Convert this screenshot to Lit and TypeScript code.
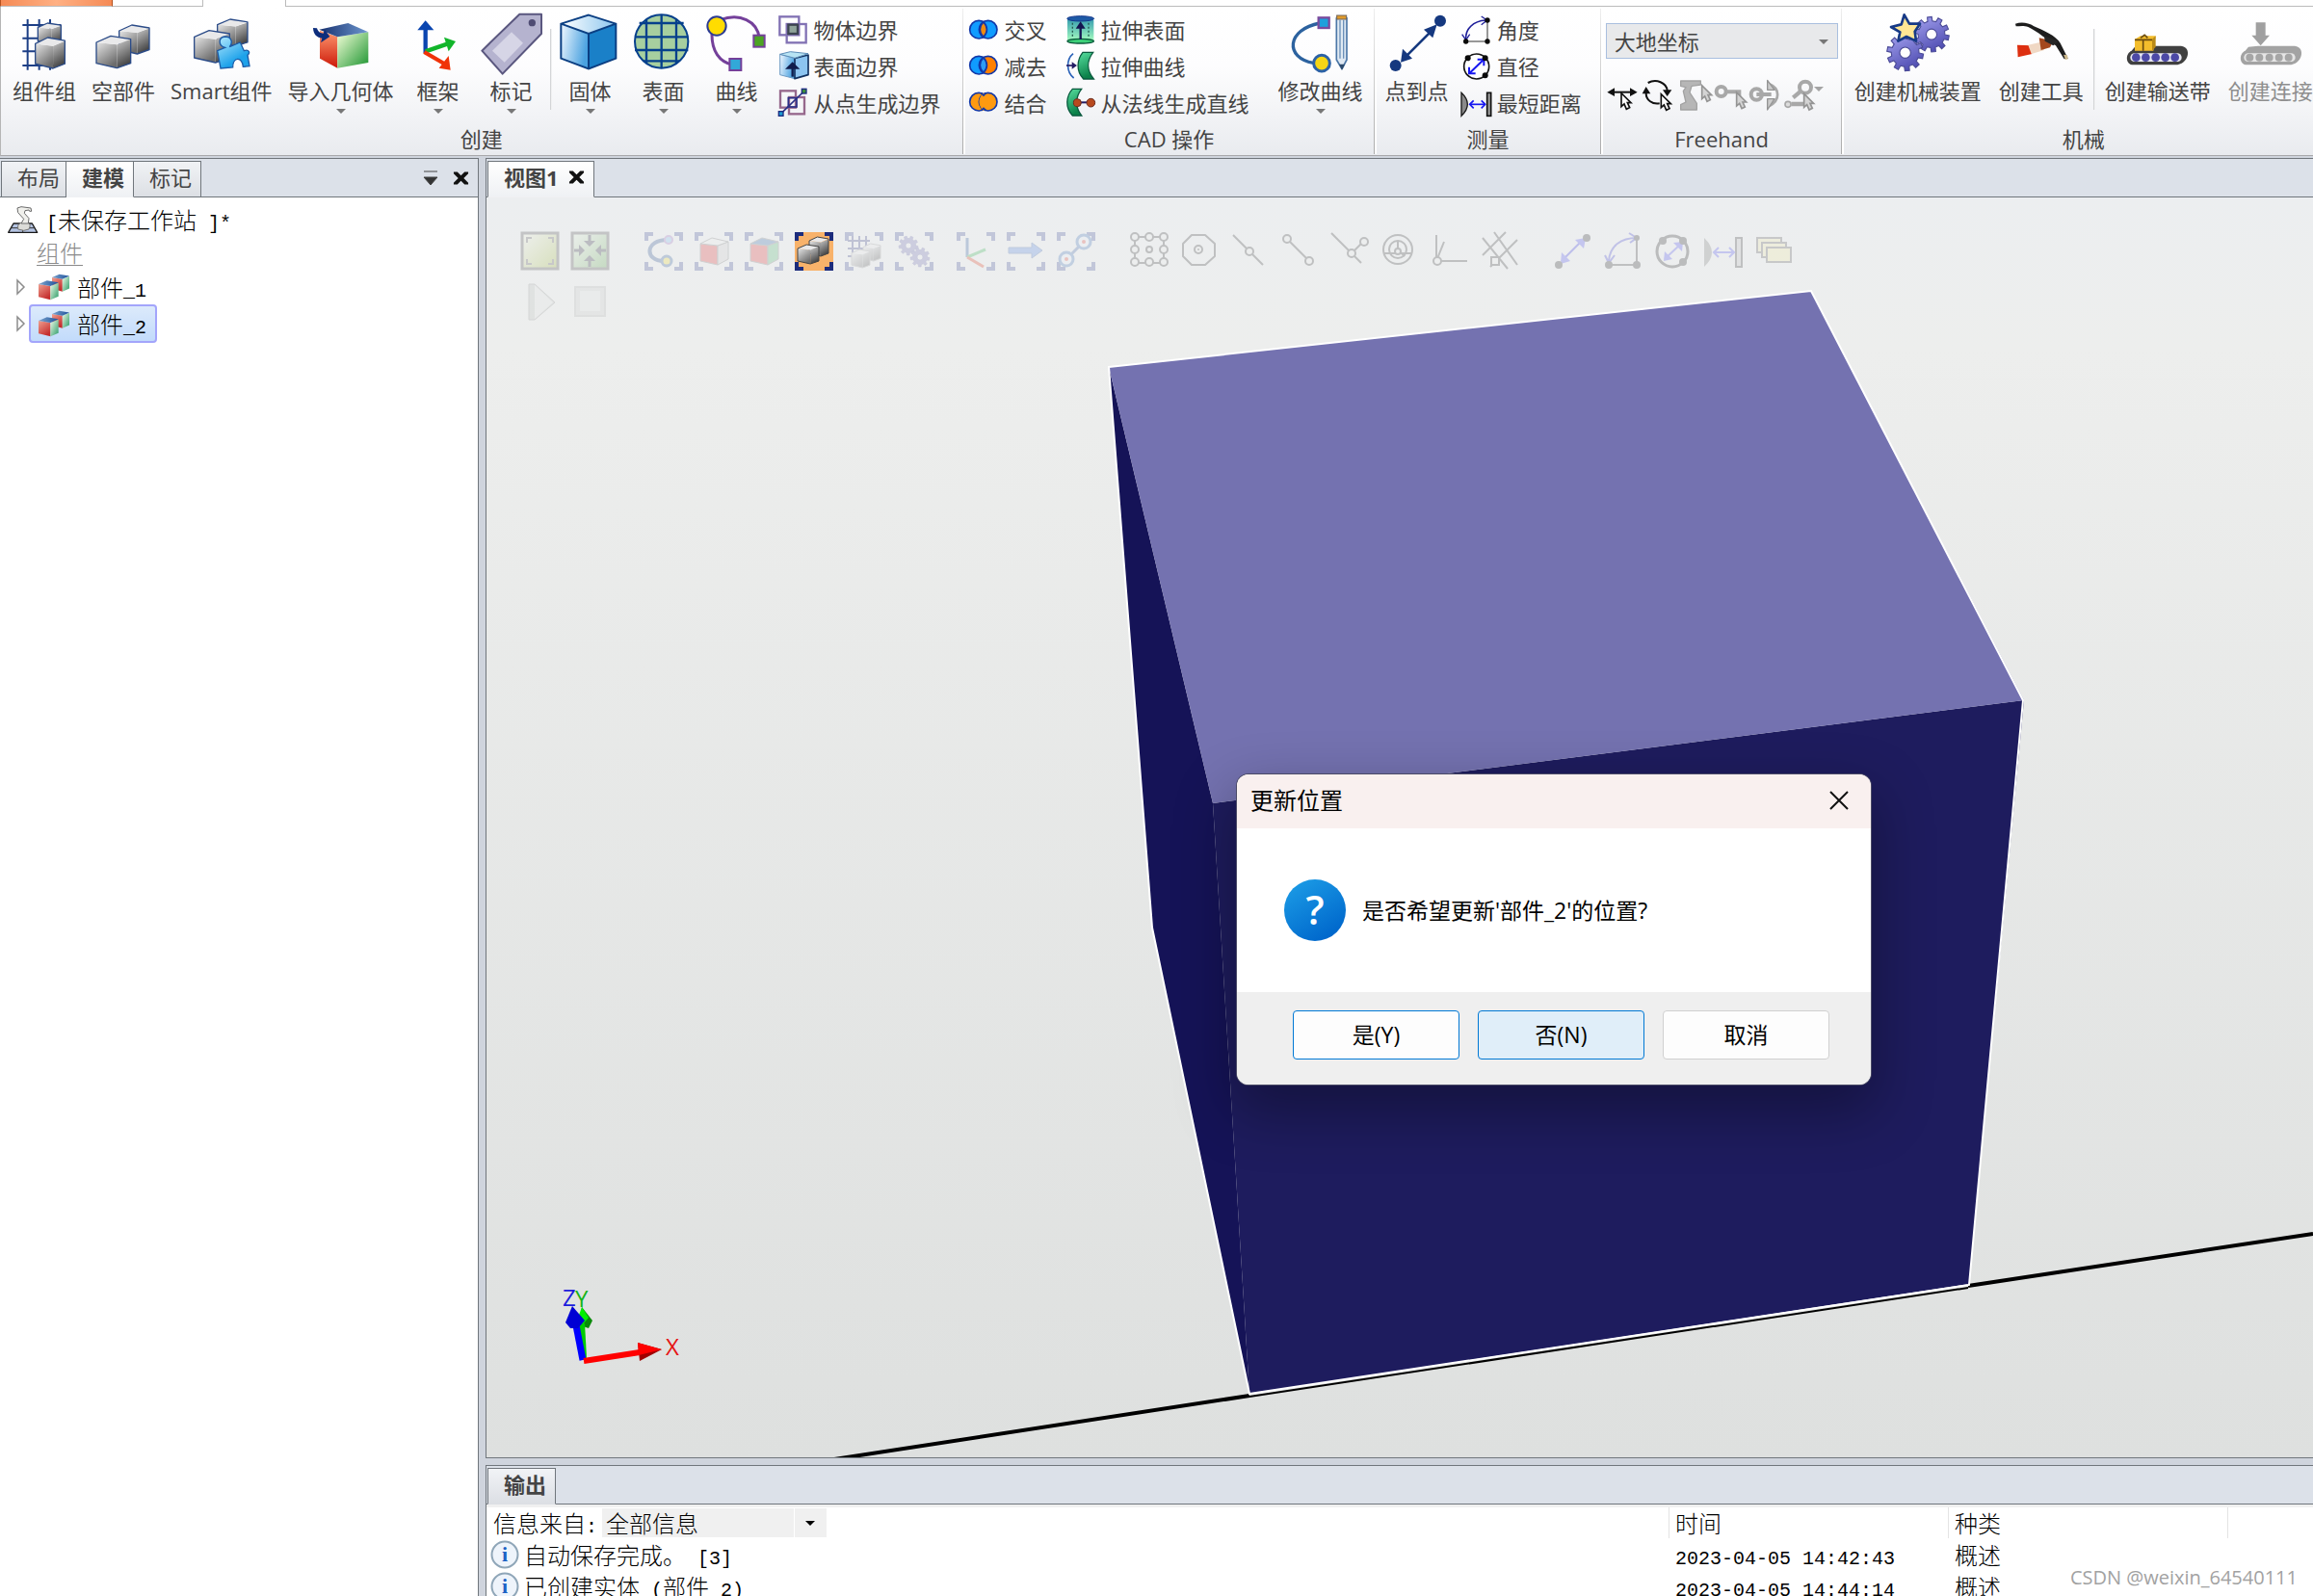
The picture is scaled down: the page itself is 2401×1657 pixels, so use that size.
import { LitElement, html, svg, css, TemplateResult, SVGTemplateResult } from "lit";
import { customElement } from "lit/decorators.js";

type Art = SVGTemplateResult;

/* ---------- drawing helpers ---------- */

const poly = (points: string, fill: string, stroke = "none", w = 0): Art =>
  svg`<polygon points=${points} fill=${fill} stroke=${stroke} stroke-width=${w} stroke-linejoin="round"/>`;

const line = (d: string, stroke: string, w: number): Art =>
  svg`<path d=${d} fill="none" stroke=${stroke} stroke-width=${w}/>`;

const rect = (x: number, y: number, w: number, h: number, fill: string, stroke = "none", sw = 0): Art =>
  svg`<rect x=${x} y=${y} width=${w} height=${h} fill=${fill} stroke=${stroke} stroke-width=${sw}/>`;

const dot = (x: number, y: number, r: number, fill: string, stroke = "none", sw = 0): Art =>
  svg`<circle cx=${x} cy=${y} r=${r} fill=${fill} stroke=${stroke} stroke-width=${sw}/>`;

const box = (x: number, y: number, w: number, h: number, outline = "#2c4c88", sw = 4): Art => {
  const p = (pts: number[][]) => pts.map(([a, b]) => `${x + a * w},${y + b * h}`).join(" ");
  return svg`
    ${poly(p([[0, 0.2], [0.6, 0.27], [0.6, 1], [0, 0.85]]), "url(#steelL)")}
    ${poly(p([[0.6, 0.27], [1, 0.12], [1, 0.85], [0.6, 1]]), "url(#steelR)")}
    ${poly(p([[0, 0.2], [0.42, 0], [1, 0.1], [0.6, 0.27]]), "#e9e9ea")}
    ${poly(p([[0, 0.2], [0.42, 0], [1, 0.1], [1, 0.85], [0.6, 1], [0, 0.85]]), "none", outline, sw)}`;
};

const rgbBox = (x: number, y: number, w: number, h: number): Art => {
  const p = (pts: number[][]) => pts.map(([a, b]) => `${x + a * w},${y + b * h}`).join(" ");
  return svg`
    ${poly(p([[0, 0.18], [0.6, 0.28], [0.6, 1], [0, 0.84]]), "url(#redFace)")}
    ${poly(p([[0.6, 0.28], [1, 0.12], [1, 0.82], [0.6, 1]]), "url(#greenFace)")}
    ${poly(p([[0, 0.18], [0.42, 0], [1, 0.1], [0.6, 0.28]]), "url(#blueFace)")}`;
};

const gear = (cx: number, cy: number, r: number, teeth: number, fill: string, stroke: string): Art => {
  let d = "";
  const step = (Math.PI * 2) / teeth;
  for (let i = 0; i < teeth; i++) {
    const marks: [number, number][] = [[-0.28, 0.76], [-0.2, 1], [0.2, 1], [0.28, 0.76]];
    for (const [o, k] of marks) {
      const a = i * step + o * step + 0.2;
      d += `${d ? "L" : "M"}${(cx + Math.cos(a) * r * k).toFixed(1)},${(cy + Math.sin(a) * r * k).toFixed(1)}`;
    }
  }
  const h = r * 0.3;
  d += `ZM${cx - h},${cy}a${h},${h} 0 1 0 ${2 * h},0a${h},${h} 0 1 0 ${-2 * h},0Z`;
  return svg`<path d=${d} fill=${fill} fill-rule="evenodd" stroke=${stroke} stroke-width=${r * 0.06}/>`;
};

const pointer = (x: number, y: number, fill: string, stroke: string): Art =>
  svg`<path d="M${x},${y}v42l9,-8l7,16l10,-5l-7,-15h11z" fill=${fill} stroke=${stroke} stroke-width="5"/>`;

const icon = (viewBox: string, cls: string, art: Art): TemplateResult =>
  html`<svg class=${cls} viewBox=${viewBox} aria-hidden="true">${art}</svg>`;

/* ---------- ribbon artwork ---------- */

const big: Record<string, [string, Art]> = {
  group: ["42 42 192 192", svg`
    ${line("M86 60V218M122 60V218M156 60V100M70 78H190M70 119H120M70 160H120M70 204H170M156 204V218", "#1d3f86", 6)}
    ${box(118, 72, 72, 66)}${box(110, 117, 92, 96)}`],
  part: ["291 42 192 192", svg`${box(374, 78, 94, 90)}${box(303, 112, 107, 100)}`],
  smart: ["591 42 192 192", svg`
    ${box(674, 60, 94, 84)}${box(602, 95, 110, 100)}
    <path d="M684 213L674 158L698 148C676 142 676 116 698 114C720 114 722 134 712 146L745 132L757 158C774 152 776 166 768 172L774 206L754 208C752 176 722 176 722 210Z" fill="url(#puzzle)" stroke="#1c5aa6" stroke-width="4"/>`],
  importer: ["957 42 192 192", svg`
    ${poly("987,95 1042,115 1042,212 987,182", "url(#redStrong)")}
    ${poly("1042,115 1138,100 1138,195 1042,212", "url(#greenStrong)")}
    ${poly("985,92 1075,72 1138,100 1042,115", "url(#navyTop)")}
    <path d="M966 87C967 108 978 117 994 119L990 133L1018 114L1002 92L998 104C990 104 982 100 978 88Z" fill="#0d2d7c"/>`],
  frame: ["1266 42 192 192", svg`
    ${line("M1322 165V88", "#0a45b0", 13)}${poly("1322,64 1348,94 1297,94", "#0a45b0")}
    ${line("M1322 160L1392 136", "#11b52a", 13)}${poly("1416,129 1380,116 1394,160", "#11b52a")}
    ${line("M1318 162L1380 198", "#f03208", 13)}${poly("1400,218 1364,212 1394,174", "#f03208")}`],
  tag: ["-6 42 192 192", svg`
    ${poly("115,44 183,44 183,105 62,230 -2,158", "#b5b3cf", "#5a577f", 6)}
    ${poly("90,100 126,134 68,194 30,158", "#d6d5e6")}${dot(154, 71, 11, "#4f4c73")}`],
  solid: ["240 42 192 192", svg`
    ${poly("330,47 415,74 330,105 244,74", "url(#iceTop)")}
    ${poly("244,74 330,105 330,214 244,182", "url(#iceLeft)")}
    ${poly("330,105 415,74 415,182 330,214", "#1a80c8")}
    ${line("M330 47L415 74V182L330 214L244 182V74ZM244 74L330 105L415 74M330 105V214", "#0b3f83", 6)}`],
  surface: ["468 42 192 192", svg`
    ${dot(557, 129, 83, "#a7cf9f")}
    ${line("M510 60V198M557 46V212M603 60V198M488 72H626M474 115H640M474 156H640M500 190H612", "#06408c", 7)}
    ${dot(557, 129, 83, "none", "#06408c", 6)}`],
  curve: ["696 42 192 192", svg`
    ${line("M740 62C800 40 856 64 862 120M714 100C712 160 738 194 780 202", "#74409a", 9)}
    ${dot(729, 81, 29, "#ffdc00", "#2b3b93", 6)}
    ${rect(844, 110, 34, 36, "#4ca422", "#74409a", 6)}${rect(769, 183, 36, 36, "#32a8d8", "#74409a", 6)}`],
  modify: ["1047 42 192 192", svg`
    ${line("M1140 72C1036 92 1030 180 1120 196", "#2c629f", 10)}
    ${rect(1136, 55, 33, 32, "#1ea0dc", "#7a4b9e", 7)}${dot(1146, 197, 25, "#f6d615", "#2c62a5", 9)}
    ${poly("1192,56 1224,56 1224,186 1209,215 1192,186", "#dfe9f3", "#4d78a8", 5)}
    ${line("M1203 62V182M1214 62V182", "#6b90b8", 4)}${rect(1193, 48, 30, 12, "#e09a2a", "#70655a", 3)}
    ${poly("1200,200 1218,200 1209,218", "#2c4a6c")}`],
  p2p: ["57 42 192 192", svg`
    ${dot(225, 65, 18, "#15387f")}${dot(86, 204, 18, "#15387f")}
    ${line("M110 184L206 88", "#15387f", 8)}
    ${poly("215,76 174,92 202,118", "#15387f")}${poly("102,194 108,152 138,182", "#15387f")}`],
  mech: ["180 42 192 192", svg`
    ${gear(318, 107, 55, 10, "url(#gearFill)", "#4a4a96")}${gear(236, 164, 57, 10, "url(#gearFill)", "#4a4a96")}
    ${poly("233,46 249,74 282,74 266,98 270,128 240,114 214,128 220,100 192,84 224,76", "#ffe694", "#173a86", 8)}`],
  tool: ["567 42 192 192", svg`
    <path d="M582 74C600 68 622 70 640 82C672 96 706 110 722 134L746 182L734 184L708 142C680 124 652 98 622 84C606 78 594 82 584 82Z" fill="#1d1d1d"/>
    ${poly("588,140 632,142 634,168 590,178", "#dd2f10")}${poly("622,140 668,130 672,156 632,168", "#f0d8c4")}
    ${poly("656,118 700,128 690,148 662,156", "#a4481e")}${poly("672,112 718,128 700,142 674,128", "#262626")}
    ${poly("732,170 744,172 746,184 738,186", "#cdb98c")}`],
  conveyor: ["936 42 192 192", svg`
    <path d="M960 146L990 143H1104C1140 146 1128 202 1086 202H956C930 202 930 166 950 158Z" fill="#404040"/>
    <rect x="946" y="166" width="160" height="26" rx="13" fill="#e8e8f2"/>
    ${[964, 994, 1025, 1055, 1085].map((x) => dot(x, 179, 13, "#4c49a6"))}
    ${poly("960,122 978,112 1025,112 1018,158 960,158", "#f3bd2c")}${poly("1014,122 1025,112 1025,146 1014,158", "#b98a18")}
    ${line("M986 122V158M960 124H1014M978 118L992 108M1000 118L990 108", "#6b4c10", 5)}`],
  connect: ["1287 42 192 192", svg`
    <path d="M1314 146L1344 143H1458C1494 146 1482 202 1440 202H1310C1284 202 1284 166 1304 158Z" fill="#a3a3a3"/>
    <rect x="1300" y="166" width="160" height="26" rx="13" fill="#e6e6e6"/>
    ${[1318, 1348, 1379, 1409, 1439].map((x) => dot(x, 179, 12, "#a6a6a6"))}
    ${poly("1337,70 1367,70 1367,110 1380,110 1352,142 1324,110 1337,110", "#a0a0a0")}`],
};

const venn = (y: number, left: string, mid: string, right: string, joined = false): Art => svg`
  ${dot(78, y, 28, left, "#1238a8", 5)}${dot(107, y, 28, right, "#1238a8", 5)}
  <path d="M92.500 ${y - 24}Q114 ${y} 92.500 ${y + 24}Q71 ${y} 92.500 ${y - 24}Z" fill=${mid} stroke=${joined ? mid : "#1238a8"} stroke-width="5"/>
  ${line(joined ? `M86 ${y - 27}L93 ${y - 20}L100 ${y - 27}M86 ${y + 27}L93 ${y + 20}L100 ${y + 27}` : "", "#1238a8", 5)}`;

const small: Record<string, [string, Art]> = {
  body: ["918 44 96 96", svg`
    ${rect(925, 51, 60, 57, "none", "#8272b4", 7)}${rect(947, 74, 60, 58, "none", "#8272b4", 7)}
    ${rect(952, 76, 29, 28, "#8fa39a", "#3c4450", 7)}`],
  face: ["918 160 96 96", svg`
    ${poly("926,170 972,182 972,246 926,234", "url(#iceLeft)", "#6f9cc4", 3)}
    ${poly("972,182 1014,172 1014,234 972,246", "#8cc4f0", "#12315f", 5)}
    ${poly("926,170 958,162 1014,168 972,182", "#b8e4f4", "#5d8db8", 3)}
    ${line("M965 240V212", "#101c4c", 7)}${poly("965,194 988,216 942,216", "#101c4c")}`],
  points: ["918 274 96 96", svg`
    ${rect(927, 284, 48, 52, "none", "#96688c", 7)}${rect(954, 304, 48, 52, "none", "#96688c", 7)}
    ${line("M930 354L1000 286", "#2a2f86", 5)}${rect(952, 306, 26, 28, "none", "#2a2f86", 5)}
    ${rect(922, 348, 14, 14, "#1c9cd0", "#1c2a80", 4)}${rect(994, 278, 14, 14, "#3c8c3c", "#1c2a80", 4)}`],
  intersect: ["45 44 96 96", venn(91, "#109cff", "#f08a10", "#109cff")],
  subtract: ["45 160 96 96", venn(204, "#109cff", "#2d9df4", "#ff8000")],
  union: ["45 274 96 96", venn(318, "#ff9a10", "#ff9a10", "#ff9a10", true)],
  extrudeFace: ["345 44 96 96", svg`
    ${rect(354, 60, 82, 68, "url(#mint)")}<ellipse cx="395" cy="57" rx="42" ry="8" fill="#1d5aa6" stroke="#15388c" stroke-width="3"/>
    <ellipse cx="395" cy="127" rx="41" ry="7" fill="#3cd078" stroke="#0b5a3c" stroke-width="4"/>
    <path d="M370 70V118M420 70V118" stroke="#245a50" stroke-width="4" stroke-dasharray="6 6"/>
    ${line("M395 122V84", "#141450", 7)}${poly("395,66 410,88 380,88", "#141450")}`],
  extrudeCurve: ["345 160 96 96", svg`
    ${line("M372 168C350 186 350 226 374 244", "#2a62b8", 5)}${line("M351 205H374", "#241c64", 5)}${poly("384,205 368,194 368,216", "#241c64")}
    <path d="M402 164H434C414 190 414 220 436 247H404C380 222 384 186 402 164Z" fill="url(#jade)" stroke="#0a5a3e" stroke-width="4"/>`],
  normal: ["345 274 96 96", svg`
    <path d="M370 278H398C378 304 378 336 398 361H370C346 336 350 300 370 278Z" fill="url(#jade)" stroke="#0a5a3e" stroke-width="4"/>
    ${line("M385 320H426", "#241c64", 6)}${dot(385, 321, 12, "#b84a1e", "#6c2c20", 3)}${dot(427, 321, 13, "#b84a1e", "#6c2c20", 3)}`],
  angle: ["291 44 96 96", svg`
    ${line("M375 62V128H308", "#333", 3)}${line("M308 122C306 90 330 64 370 62", "#1f1f9a", 5)}
    ${line("M296 106L308 124L320 106M356 50L374 62L356 76", "#1f1f9a", 4)}
    ${dot(375, 62, 8, "#0a0a0a")}${dot(375, 128, 8, "#0a0a0a")}${dot(308, 128, 8, "#0a0a0a")}`],
  diameter: ["291 160 96 96", svg`
    ${dot(341, 208, 39, "#fff", "#141414", 5)}${line("M320 228L362 188", "#1616f0", 6)}
    ${line("M344 186H364V206M338 230H318V210", "#1616f0", 6)}
    ${dot(314, 182, 9, "#0a0a0a")}${dot(368, 182, 9, "#0a0a0a")}${dot(368, 236, 9, "#0a0a0a")}`],
  distance: ["291 274 96 96", svg`
    <path d="M294 290Q332 326 294 362Z" fill="#8a8a8a" stroke="#1a1a1a" stroke-width="4"/>
    ${rect(374, 290, 12, 72, "#9a9a9a", "#111", 5)}${line("M322 326H366", "#1616f0", 5)}
    ${line("M332 314L320 326L332 338M356 314L368 326L356 338", "#1616f0", 5)}`],
};

const freehand: [string, string, Art][] = [
  ["移动", "747 243 108 108", svg`
    ${line("M765 287H832", "#111", 6)}${poly("751,287 774,274 774,300", "#111")}${poly("845,287 822,274 822,300", "#111")}
    ${pointer(795, 290, "#fff", "#111")}`],
  ["旋转", "855 243 108 108", svg`
    ${line("M878 258C904 244 936 258 938 282M872 290C872 312 892 326 914 322", "#111", 6)}
    ${poly("872,270 886,292 860,292", "#111")}${poly("938,300 924,280 952,280", "#111")}${pointer(919, 293, "#fff", "#111")}`],
  ["手动关节", "963 243 108 108", svg`
    ${poly("980,252 1042,252 1042,264 1014,268 1008,288 1030,322 1030,342 980,342 980,326 996,318 988,284 996,272 980,268", "#b6b6b6", "#a2a2a2", 4)}
    ${pointer(1046, 266, "#d4d4d4", "#949494")}`],
  ["手动线性", "1071 243 108 108", svg`
    ${dot(1106, 285, 15, "none", "#a8a8a8", 12)}${line("M1120 286H1162V304", "#a8a8a8", 12)}${pointer(1154, 288, "#d4d4d4", "#949494")}`],
  ["手动重定位", "1179 243 108 108", svg`
    ${dot(1216, 294, 17, "none", "#a8a8a8", 12)}${line("M1216 294H1262", "#a8a8a8", 12)}
    ${line("M1256 262C1290 276 1290 312 1256 330", "#a8a8a8", 8)}${poly("1250,250 1272,280 1250,280", "#ccc", "#949494", 4)}${poly("1250,342 1272,308 1250,308", "#ccc", "#949494", 4)}`],
  ["多个机器人", "1287 243 108 108", svg`
    ${dot(1368, 272, 18, "none", "#a8a8a8", 12)}${line("M1354 284L1330 304M1324 324H1362", "#a8a8a8", 13)}
    ${dot(1314, 325, 9, "#ddd", "#a8a8a8", 5)}${pointer(1364, 292, "#d4d4d4", "#949494")}`],
];

/* ---------- viewport toolbar artwork (40 x 40) ---------- */

const brackets = line("M2 9V2H9M31 2H38V9M38 31V38H31M9 38H2V31", "#3c4c96", 4);
const greyLine = (d: string) => line(d, "#333", 2);
const ring = (x: number, y: number, r = 4) => dot(x, y, r, "#eee", "#333", 2);

const viewTools: [string, Art][][] = [
  [
    ["查看全部", svg`${rect(1, 1, 37, 37, "url(#olive)", "#444", 3)}${line("M6 11V6H11M28 6H33V11M33 28V33H28M11 33H6V28", "#555", 2)}`],
    ["查看中心", svg`${rect(1, 1, 37, 37, "url(#olive2)", "#444", 3)}
      ${poly("19,15 13,9 25,9", "#223")}${poly("19,24 13,30 25,30", "#223")}${poly("14,19 8,13 8,25", "#223")}${poly("25,19 31,13 31,25", "#223")}
      ${line("M19 3V10M19 29V36M3 19H9M30 19H36", "#223", 3)}`],
  ],
  [
    ["选择曲线", svg`${brackets}${line("M24 8C0 8 0 30 20 30", "#244c8c", 4)}${dot(25, 8, 4, "#7bc0f0", "#a070c0", 2)}${dot(23, 30, 5, "#f0dc30", "#2c5a9c", 3)}`],
    ["选择表面", svg`${brackets}${poly("6,12 24,14 24,34 6,30", "#e03030", "#777", 1)}${poly("24,14 35,10 35,28 24,34", "#ccc", "#777", 1)}${poly("6,12 18,6 35,10 24,14", "#eee", "#777", 1)}`],
    ["选择物体", svg`${brackets}${poly("6,12 24,14 24,34 6,30", "#e03030", "#777", 1)}${poly("24,14 35,10 35,28 24,34", "#4cb86c", "#777", 1)}${poly("6,12 18,6 35,10 24,14", "#2c62a8", "#777", 1)}`],
    ["选择部件", svg`${rect(0, 0, 40, 40, "#f8b26a")}${line("M2 9V2H9M31 2H38V9M38 31V38H31M9 38H2V31", "#1c2c7c", 4)}
      ${box(15, 5, 20, 20, "#444", 1)}${box(3, 13, 22, 20, "#444", 1)}`],
    ["选择组", svg`${brackets}${line("M8 4V34M15 4V20M22 4V18M3 9H26M3 17H22M3 25H10", "#333a80", 2)}${box(19, 12, 18, 18, "#999", 1)}${box(7, 18, 19, 19, "#999", 1)}`],
    ["选择机械装置", svg`${brackets}${gear(14, 14, 10, 9, "#6a68b0", "#4a4a96")}${gear(26, 26, 10, 9, "#6a68b0", "#4a4a96")}`],
  ],
  [
    ["选择目标点", svg`${brackets}${line("M11 26V6", "#24549c", 3)}${line("M11 26L30 18", "#2cb44c", 3)}${line("M11 26L28 36", "#e03818", 3)}`],
    ["选择移动指令", svg`${brackets}${poly("2,16 26,16 26,11 37,19 26,27 26,22 2,22", "#4c80e0", "#3860a8", 1)}`],
    ["选择路径", svg`${brackets}${line("M13 25L25 13", "#3c62a8", 3)}${dot(28, 10, 7, "#e8eefa", "#3c72b8", 3)}${dot(10, 28, 7, "#e8eefa", "#3c72b8", 3)}${dot(28, 10, 2, "#e04030")}${dot(10, 28, 2, "#e04030")}`],
  ],
  [
    ["捕捉对象", svg`${rect(5, 5, 30, 27, "none", "#333", 2)}${[5, 20, 35].map((x) => [5, 18, 31].map((y) => (x === 20 && y === 18 ? ring(20, 18, 3) : ring(x, y))))}`],
    ["捕捉中心", svg`${poly("12,3 26,3 36,12 36,25 26,34 12,34 3,25 3,12", "none", "#333", 2)}${ring(19, 18)}${dot(19, 18, 1, "#333")}`],
    ["捕捉中点", svg`${greyLine("M3 3L34 34")}${ring(20, 20)}`],
    ["捕捉末端", svg`${greyLine("M6 6L30 30")}${ring(7, 7)}${ring(30, 30)}`],
    ["捕捉边缘", svg`${greyLine("M1 1L32 32M36 8L22 22")}${ring(22, 22)}${ring(35, 10)}`],
    ["捕捉重心", svg`${dot(18, 18, 15, "none", "#333", 2)}${dot(18, 18, 9, "none", "#333", 2)}${greyLine("M3 22H33M18 9V18L25 25")}${ring(18, 20, 3)}`],
    ["捕捉本地原点", svg`${greyLine("M6 3V30H38M6 30L14 10")}${ring(7, 30)}`],
    ["捕捉网格", svg`${greyLine("M2 24L26 0M10 36L38 8M14 0L38 34M2 6L28 38")}${rect(11, 26, 8, 8, "#eee", "#333", 2)}`],
  ],
  [
    ["点到点", svg`${line("M8 30L30 8", "#2a2ae0", 2)}${poly("33,6 22,8 31,17", "#4a4af0")}${poly("7,33 8,21 17,30", "#4a4af0")}${dot(34, 6, 4, "#222")}${dot(5, 34, 4, "#222")}`],
    ["角度", svg`${greyLine("M34 5V34H5")}${line("M5 30C6 14 18 6 34 6M1 24L5 32L11 24M26 1L34 6L27 11", "#3a3ad0", 2)}${dot(34, 6, 3, "#222")}${dot(34, 34, 4, "#222")}${dot(5, 34, 4, "#222")}`],
    ["直径", svg`${dot(19, 20, 16, "none", "#222", 3)}${line("M11 28L28 12", "#4a4af0", 2)}${poly("30,10 20,11 29,20", "#4a4af0")}${poly("10,30 11,20 19,28", "#4a4af0")}${dot(9, 9, 4, "#222")}${dot(30, 9, 4, "#222")}${dot(30, 31, 4, "#222")}`],
    ["最短距离", svg`<path d="M0 6Q16 21 0 36Z" fill="#777"/>${rect(33, 6, 6, 30, "#bbb", "#333", 2)}${line("M10 21H31M15 16L10 21L15 26M26 16L31 21L26 26", "#4a4af0", 2)}`],
    ["保留标记", svg`${rect(3, 6, 25, 15, "#efe7a8", "#555", 2)}${rect(8, 11, 25, 15, "#efe7a8", "#555", 2)}${rect(13, 16, 25, 15, "#f2eaa0", "#555", 2)}`],
  ],
];

const runTools: [string, Art][] = [
  ["开始仿真", svg`${poly("8,2 14,2 35,21 14,39 8,39", "#8a8f8c", "#333", 1)}${poly("14,3 33,21 14,38", "#d8dcda")}`],
  ["停止仿真", svg`${rect(4, 5, 31, 30, "#a8acaa", "#777", 2)}${rect(9, 9, 21, 21, "#d4d8d6")}`],
];

/* Half-width runs sit on a grid of half an ideograph. */
const grid = (text: string) =>
  text.split(/([\x20-\x7e]+)/).filter(Boolean).map((run) =>
    /^[\x20-\x7e]/.test(run) ? html`<span class="half">${run}</span>` : run);

const closeMark = html`<svg class="close-mark" viewBox="0 0 18 16" aria-hidden="true">
  <path d="M1 1H5L9 5L13 1H17V3L12 8L17 13V15H13L9 11L5 15H1V13L6 8L1 3Z" fill="#111"/></svg>`;

@customElement("app-root")
export class AppRoot extends LitElement {
  static styles = css`
    :host {
      display: flex;
      flex-direction: column;
      position: relative;
      height: 100vh;
      overflow: hidden;
      background: #cfd4dd;
      color: #444;
      font: 22px/28px "Open Sans", "Noto Sans CJK SC", sans-serif;
    }
    * { box-sizing: border-box; }
    button, select {
      font: inherit;
      color: inherit;
      margin: 0;
      padding: 0;
      border: 0;
      background: none;
      border-radius: 0;
      appearance: none;
    }
    svg { display: block; flex: none; overflow: visible; }
    .defs { position: absolute; width: 0; height: 0; }

    .menu { display: flex; flex: none; height: 7px; background: #fff; }
    .file { width: 117px; background: linear-gradient(90deg, #f58a55, #ffb083 50%, #f58a55); border: solid #b4511f; border-width: 0 1px; border-bottom: 1px solid #bbb; }
    .tab-gap { width: 94px; border: solid #bbb; border-width: 0 1px 1px 0; }
    .tab-open { width: 85px; }
    .tab-rest { flex: 1; border: solid #bbb; border-width: 0 0 1px 1px; }

    .ribbon {
      display: flex;
      flex: none;
      height: 155px;
      border-left: 1px solid #b5b5b5;
      border-bottom: 1px solid #a8a8ab;
      background: linear-gradient(#fff, #fdfdfe 40%, #e9ebef);
    }
    .group { display: flex; flex-direction: column; flex: none; padding: 0 4px; }
    .group.tight { padding: 0 1px; }
    .group.snug { padding: 0 3px; }
    .group-body { display: flex; flex: 1; }
    .group-title { margin: 0; height: 30px; font-size: 22px; font-weight: 400; line-height: 27px; text-align: center; }
    .rule { flex: none; width: 3px; margin: 2px 0 1px; background: linear-gradient(#eee, #aaa) 0 0 / 1px 100% no-repeat, linear-gradient(#fff, #fff) 1px 0 / 2px 100% no-repeat; }
    .split { flex: none; width: 2px; height: 84px; margin: 23px 2px 0; background: linear-gradient(90deg, #c4c6c9, #fff); }
    .large {
      display: flex;
      flex-direction: column;
      align-items: center;
      gap: 4px;
      min-width: 76px;
      padding: 7px 8px 0;
      line-height: 25px;
      white-space: nowrap;
    }
    .large:disabled { color: #8e8e8e; }
    .large-art { width: 64px; height: 64px; margin: 0 -4px; }
    .large .caret { margin-top: 2px; }
    .caret { width: 10px; height: 5px; }
    .roomy { gap: 2px; }
    .roomy .split { margin: 23px 0 0; }
    .column { display: flex; flex-direction: column; padding-top: 5px; }
    .column.wide { padding-left: 18px; padding-right: 22px; }
    .column.end { padding-left: 4px; padding-right: 18px; }
    .row { display: flex; align-items: center; gap: 6px; height: 38px; white-space: nowrap; }
    .small-art { width: 32px; height: 32px; }
    .free { flex-direction: column; padding: 17px 0 0; width: 241px; }
    .pick { position: relative; display: flex; }
    .pick select { width: 100%; height: 37px; padding-left: 8px; border: 1px solid #a9bfdf; background: #e8e9eb; }
    .pick .caret { position: absolute; right: 10px; top: 17px; }
    .tools { display: flex; align-items: center; padding-top: 20px; }
    .free-art { width: 36px; height: 36px; }
    .tools .caret { margin-bottom: 14px; }

    .work { display: flex; flex: 1; min-height: 0; gap: 7px; padding-top: 2px; }
    .side { display: flex; flex-direction: column; flex: none; width: 497px; border: solid #70767c; border-width: 1px 1px 0 0; background: #fff; color: #000; }
    .strip { display: flex; flex: none; align-items: stretch; height: 40px; padding: 2px 0 0 1px; background: #dce1e9; box-shadow: inset 0 -1px #70767c; color: #444; }
    .tab { display: flex; align-items: center; gap: 12px; padding: 0 6px 4px 16px; border: 1px solid #70767c; background: linear-gradient(#f1f3f6, #dcdfe4); }
    .tab + .tab { padding-right: 9px; border-left: 0; }
    .tab.active { border-bottom-color: #f0f1f3; background: linear-gradient(#fff, #eff1f4); font-weight: 700; }
    .tab.flat { border-bottom-color: #dcdfe4; font-weight: 700; }
    .strip-end { display: flex; align-items: center; gap: 16px; margin-left: auto; padding: 0 9px 2px 0; }
    .close-mark { width: 17px; height: 16px; }
    .menu-mark { width: 14px; height: 16px; }

    .simple { font: 24px/32px "Noto Sans CJK SC", sans-serif; font-weight: 300; color: #000; }
    .half { font-family: "Liberation Mono", monospace; font-size: 20px; line-height: 0; white-space: pre; }
    .tree { margin: 0; padding: 5px 0 0; list-style: none; white-space: nowrap; }
    .station { display: flex; align-items: center; gap: 9px; height: 36px; padding-left: 8px; }
    .station-art { width: 31px; height: 28px; }
    .heading { padding-left: 38px; height: 33px; color: #8b8b8b; }
    .heading span { border-bottom: 1px solid #8b8b8b; line-height: 26px; display: inline-block; }
    .node { display: flex; align-items: center; height: 38px; padding-left: 17px; gap: 4px; }
    .node-art { width: 32px; height: 28px; }
    .arrow { width: 9px; height: 16px; }
    .entry { display: flex; align-items: center; gap: 8px; height: 40px; padding: 0 9px 0 8px; border: 2px solid transparent; border-radius: 4px; }
    .entry.chosen { border-color: #a3a5fb; background: linear-gradient(#dceafb, #c2dbfb); }

    .main { display: flex; flex: 1; flex-direction: column; min-width: 0; gap: 7px; }
    .view { display: flex; flex: 1; flex-direction: column; min-height: 0; border: solid #70767c; border-width: 1px 0 1px 1px; }
    .view .tab { gap: 10px; padding-right: 9px; }
    .canvas { position: relative; flex: 1; min-height: 0; overflow: hidden; background: linear-gradient(#eceef0, #edeeed 12%, #dee0df); }
    .scene { width: 100%; height: 100%; }
    .axis-text { font: 24px "Open Sans", sans-serif; }
    .float { position: absolute; left: 36px; top: 36px; display: flex; flex-direction: column; gap: 12px; }
    .bar { display: flex; gap: 36px; }
    .set { display: flex; gap: 12px; }
    .set.near { margin-left: -12px; }
    .view-tool { opacity: 0.24; }
    .view-tool.on { opacity: 1; }
    .view-tool.run { opacity: 0.12; }
    .view-art { width: 40px; height: 40px; }

    .output { display: flex; flex-direction: column; flex: none; height: 136px; overflow: hidden; border: solid #70767c; border-width: 1px 0 0 1px; background: #fff; }
    .output .tab { padding-right: 9px; }
    .log { width: 100%; table-layout: fixed; border-collapse: separate; border-spacing: 0; border-top: 3px solid #f0f0f0; }
    .log th { height: 32px; padding: 0 6px; border-right: 1px solid #e4e4e4; text-align: left; font-weight: inherit; line-height: 30px; }
    .log th.source { padding: 0 0 0 7px; }
    .log th.tail { border: 0; }
    .log td { height: 33px; padding: 0 6px; white-space: nowrap; line-height: 32px; }
    .log td.message { padding-left: 4px; }
    .time-col, .kind-col { width: 290px; }
    .tail-col { width: 88px; }
    .filter { display: flex; align-items: center; gap: 5px; white-space: nowrap; }
    .filter-pick { position: relative; width: 233px; height: 30px; }
    .filter-pick select { display: block; width: 100%; height: 30px; padding-left: 4px; background: linear-gradient(#fff, #fff) 199px 0 / 1px 100% no-repeat #f0f0f0; }
    .filter-pick .caret { position: absolute; right: 12px; top: 13px; }
    .event { display: flex; align-items: center; gap: 5px; height: 32px; }
    .info { width: 30px; height: 30px; }
    .info-text { font: 700 22px "Liberation Serif", serif; }

    .dialog {
      position: absolute;
      left: 1284px;
      top: 804px;
      width: 658px;
      border-radius: 12px;
      overflow: hidden;
      background: #fff;
      color: #000;
      box-shadow: 0 0 0 1px #4a4a66, 0 24px 60px 6px rgba(0, 0, 0, 0.32);
    }
    .dialog-head { display: flex; align-items: center; justify-content: space-between; height: 56px; padding: 0 23px 2px 14px; background: #f9f0ef; }
    .dialog-title { margin: 0; font-size: 24px; font-weight: 400; }
    .dialog-close { width: 20px; height: 20px; }
    .dialog-body { display: flex; align-items: center; gap: 17px; height: 170px; padding-left: 49px; font-size: 23px; }
    .dialog-body p { margin: 0; }
    .question { width: 64px; height: 64px; }
    .question-text { font: 600 42px "Open Sans", sans-serif; }
    .dialog-foot { display: flex; justify-content: flex-end; gap: 19px; height: 96px; padding: 19px 43px 0 0; background: #efefef; }
    .choice { width: 173px; height: 51px; padding-bottom: 2px; border: 1px solid #d0d0d0; border-radius: 4px; background: #fdfdfd; font-size: 23px; }
    .choice.primary { border-color: #0078d4; }
    .choice.hot { border-color: #0078d4; background: #e0eef9; }
    .mark { position: absolute; right: 16px; bottom: 5px; color: #a2a2a2; font: 20px/28px "Open Sans", sans-serif; text-shadow: 1px 1px #fff; }
  `;

  private caret(fill = "#777") {
    return html`<svg class="caret" viewBox="0 0 10 5" aria-hidden="true"><path d="M0 0H10L5 5Z" fill=${fill} /></svg>`;
  }

  private large(key: string, label: string, menu = false, disabled = false) {
    const [viewBox, art] = big[key];
    return html`<button class="large" type="button" ?disabled=${disabled}>
      ${icon(viewBox, "large-art", art)}<span>${label}</span>${menu ? this.caret() : ""}
    </button>`;
  }

  private column(cls: string, items: [string, string][]) {
    return html`<div class="column ${cls}">${items.map(([key, label]) => html`
      <button class="row" type="button">${icon(small[key][0], "small-art", small[key][1])}<span>${label}</span></button>`)}</div>`;
  }

  private group(title: string, body: TemplateResult, fit = "", cls = "") {
    return html`<section class="group ${fit}"><div class="group-body ${cls}">${body}</div><h2 class="group-title">${title}</h2></section>`;
  }

  private gradient(id: string, a: string, b: string, x2: number, y2: number) {
    return svg`<linearGradient id=${id} x1="0" y1="0" x2=${x2} y2=${y2}><stop offset="0" stop-color=${a}/><stop offset="1" stop-color=${b}/></linearGradient>`;
  }

  private defs() {
    const g = this.gradient;
    return html`<svg class="defs" aria-hidden="true"><defs>
      ${g("steelL", "#e6e6e6", "#6c6c6c", 0.6, 1)}${g("steelR", "#c8c8c8", "#444", 0.3, 1)}
      ${g("puzzle", "#b8ecff", "#1ea2ea", 0.5, 0.8)}${g("redStrong", "#ff9a70", "#cc1808", 0, 1)}
      ${g("greenStrong", "#f4ffd8", "#1c9430", 1, 1)}${g("navyTop", "#16306e", "#6f98d0", 1, 0)}
      ${g("redFace", "#f0a090", "#c42c2c", 0.6, 1)}${g("greenFace", "#f0fae8", "#2c9c68", 1, 1)}${g("blueFace", "#7ca4cc", "#1c509c", 1, 0)}
      ${g("iceTop", "#fff", "#8cc6ee", 1, 0)}${g("iceLeft", "#f2f8ff", "#4aa2e0", 1, 0.3)}
      ${g("gearFill", "#a6a4f0", "#5250b4", 0.5, 1)}${g("mint", "#3aa0b0", "#a8ffc0", 0, 1)}${g("jade", "#58e0a0", "#0a8048", 0.3, 1)}
      ${g("olive", "#f4f6e8", "#94b020", 1, 1)}${g("olive2", "#e8f4e0", "#4c9c38", 1, 1)}${g("ask", "#1ea0e8", "#0068cc", 0.6, 1)}
    </defs></svg>`;
  }

  private ribbon() {
    return html`
      <div class="menu"><div class="file"></div><div class="tab-gap"></div><div class="tab-open"></div><div class="tab-rest"></div></div>
      <header class="ribbon">
        ${this.group("创建", html`
          ${this.large("group", "组件组")}${this.large("part", "空部件")}${this.large("smart", "Smart组件")}
          ${this.large("importer", "导入几何体", true)}${this.large("frame", "框架", true)}${this.large("tag", "标记", true)}
          <div class="split"></div>
          ${this.large("solid", "固体", true)}${this.large("surface", "表面", true)}${this.large("curve", "曲线", true)}
          ${this.column("end", [["body", "物体边界"], ["face", "表面边界"], ["points", "从点生成边界"]])}`)}
        <div class="rule"></div>
        ${this.group("CAD 操作", html`
          ${this.column("", [["intersect", "交叉"], ["subtract", "减去"], ["union", "结合"]])}
          ${this.column("wide", [["extrudeFace", "拉伸表面"], ["extrudeCurve", "拉伸曲线"], ["normal", "从法线生成直线"]])}
          ${this.large("modify", "修改曲线", true)}`, "snug")}
        <div class="rule"></div>
        ${this.group("测量", html`
          ${this.large("p2p", "点到点")}
          ${this.column("end", [["angle", "角度"], ["diameter", "直径"], ["distance", "最短距离"]])}`, "tight")}
        <div class="rule"></div>
        ${this.group("Freehand", html`
          <div class="pick"><select aria-label="坐标系"><option>大地坐标</option></select>${this.caret()}</div>
          <div class="tools">
            ${freehand.map(([name, vb, art]) => html`<button type="button" aria-label=${name}>${icon(vb, "free-art", art)}</button>`)}
            ${this.caret("#a4a4a4")}
          </div>`, "snug", "free")}
        <div class="rule"></div>
        ${this.group("机械", html`
          ${this.large("mech", "创建机械装置")}${this.large("tool", "创建工具")}
          <div class="split"></div>
          ${this.large("conveyor", "创建输送带")}${this.large("connect", "创建连接", false, true)}`, "snug", "roomy")}
      </header>`;
  }

  private node(label: string, chosen: boolean) {
    return html`<li class="node">
      <svg class="arrow" viewBox="0 0 9 16" aria-hidden="true"><path d="M1 1V15L8 8Z" fill="#fff" stroke="#8c8c8c" stroke-width="1.500" /></svg>
      <div class="entry ${chosen ? "chosen" : ""}">
        ${icon("0 0 96 84", "node-art", svg`${rgbBox(42, 2, 54, 54)}${rgbBox(0, 22, 62, 60)}`)}
        <span>${grid(label)}</span>
      </div>
    </li>`;
  }

  private side() {
    return html`<aside class="side">
      <div class="strip">
        <button class="tab" type="button">布局</button>
        <button class="tab active" type="button">建模</button>
        <button class="tab" type="button">标记</button>
        <div class="strip-end">
          <button type="button" aria-label="窗口菜单"><svg class="menu-mark" viewBox="0 0 14 16"><path d="M0 1H14M0 7H14L7 15Z" fill="#333" stroke="#444" stroke-width="1" /></svg></button>
          <button type="button" aria-label="关闭面板">${closeMark}</button>
        </div>
      </div>
      <ul class="tree simple">
        <li class="station">
          ${icon("24 156 93 84", "station-art", svg`
            ${poly("42,210 100,210 116,238 26,238", "#b4c3e2", "#1a1a1a", 4)}${line("M34 224H108M71 226V238", "#333", 3)}
            ${poly("56,228 56,216 64,208 88,208 94,216 90,228 74,232", "#dcdcd8", "#777", 3)}
            ${poly("66,210 74,196 56,176 54,162 66,158 96,162 98,172 92,172 90,168 78,170 76,178 90,194 88,210", "#f0f0ec", "#6b6b6b", 3)}`)}
          <span>${grid("[未保存工作站 ]*")}</span>
        </li>
        <li class="heading"><span>组件</span></li>
        ${this.node("部件_1", false)}${this.node("部件_2", true)}
      </ul>
    </aside>`;
  }

  private scene() {
    return html`<svg class="scene" viewBox="505 205 1896 1308" preserveAspectRatio="xMinYMin slice" role="img" aria-label="三维视图">
      <path d="M866 1515L1297 1449M2043 1335L2401 1281" fill="none" stroke="#000" stroke-width="4" />
      <path d="M1297 1450L2043 1337" fill="none" stroke="#000" stroke-width="2" />
      <polygon points="1151,381 1259,834 1297,1447 1196,963" fill="#151357" />
      <polygon points="1259,834 2101,727 2044,1333 1297,1447" fill="#1e1c5e" />
      <polygon points="1151,381 1880,302 2101,727 1259,834" fill="#7472b0" />
      <polygon points="1151,381 1880,302 2100,727 2044,1334 1297,1447 1196,963" fill="none" stroke="#fff" stroke-width="2" />
      <polygon points="604,1357 615,1371 611,1379 602,1376" fill="#0a8a0a" />
      <path d="M604 1357L611 1368L604 1376L600 1368Z" fill="#00f000" />
      <path d="M606 1410L604 1374" stroke="#0c0" stroke-width="6" />
      <path d="M605 1412L598 1376" stroke="#00f" stroke-width="7" />
      <polygon points="594,1356 607,1371 600,1379 592,1379 587,1373" fill="#0000d4" />
      <path d="M606 1413L664 1404" stroke="#f00" stroke-width="6" />
      <polygon points="662,1394 687,1401 664,1413" fill="#a00000" />
      <polygon points="662,1394 687,1401 663,1407" fill="#f00" />
      <text class="axis-text" x="584" y="1356" fill="#1c1cdc">Z</text>
      <text class="axis-text" x="597" y="1357" fill="#16b416">Y</text>
      <text class="axis-text" x="691" y="1407" fill="#e61414">X</text>
    </svg>`;
  }

  private viewButton([name, art]: [string, Art], extra = "") {
    const on = name === "选择部件" ? "on" : extra;
    return html`<button class="view-tool ${on}" type="button" aria-label=${name}>${icon("0 0 40 40", "view-art", art)}</button>`;
  }

  private view() {
    return html`<section class="view">
      <div class="strip"><button class="tab active" type="button">视图1 ${closeMark}</button></div>
      <div class="canvas">
        ${this.scene()}
        <div class="float">
          <div class="bar">${viewTools.map((set, i) => html`<div class="set ${i === 2 ? "near" : ""}">${set.map((t) => this.viewButton(t))}</div>`)}</div>
          <div class="set">${runTools.map((t) => this.viewButton(t, "run"))}</div>
        </div>
      </div>
    </section>`;
  }

  private event(text: string, time: string, kind: string) {
    return html`<tr>
      <td class="message"><div class="event">
        <svg class="info" viewBox="0 0 30 30" aria-hidden="true">
          <circle cx="15" cy="15" r="13.500" fill="#eef4fb" stroke="#8fa6b8" stroke-width="2" />
          <text class="info-text" x="15" y="22" text-anchor="middle" fill="#1c62c4">i</text>
        </svg>
        <span>${grid(text)}</span></div></td>
      <td>${grid(time)}</td><td>${kind}</td><td></td>
    </tr>`;
  }

  private output() {
    return html`<section class="output">
      <div class="strip"><button class="tab flat" type="button">输出</button></div>
      <table class="log simple">
        <colgroup><col /><col class="time-col" /><col class="kind-col" /><col class="tail-col" /></colgroup>
        <thead><tr>
          <th class="source"><div class="filter">
            <label for="source">${grid("信息来自:")}</label>
            <div class="filter-pick"><select id="source"><option>全部信息</option></select>${this.caret("#000")}</div>
          </div></th>
          <th>时间</th><th>种类</th><th class="tail"></th>
        </tr></thead>
        <tbody>
          ${this.event("自动保存完成。 [3]", "2023-04-05 14:42:43", "概述")}
          ${this.event("已创建实体 (部件_2)", "2023-04-05 14:44:14", "概述")}
        </tbody>
      </table>
    </section>`;
  }

  private dialog() {
    return html`<div class="dialog" role="dialog" aria-labelledby="dialog-title">
      <div class="dialog-head">
        <h1 class="dialog-title" id="dialog-title">更新位置</h1>
        <button type="button" aria-label="关闭"><svg class="dialog-close" viewBox="0 0 20 20"><path d="M1 1L19 19M19 1L1 19" stroke="#111" stroke-width="2" /></svg></button>
      </div>
      <div class="dialog-body">
        <svg class="question" viewBox="0 0 64 64" aria-hidden="true">
          <circle cx="32" cy="32" r="32" fill="url(#ask)" />
          <text class="question-text" x="32" y="47" text-anchor="middle" fill="#fff">?</text>
        </svg>
        <p>是否希望更新'部件_2'的位置?</p>
      </div>
      <div class="dialog-foot">
        <button class="choice primary" type="button">是(Y)</button>
        <button class="choice hot" type="button">否(N)</button>
        <button class="choice" type="button">取消</button>
      </div>
    </div>`;
  }

  render() {
    return html`
      ${this.defs()}${this.ribbon()}
      <div class="work">
        ${this.side()}
        <main class="main">${this.view()}${this.output()}</main>
      </div>
      ${this.dialog()}
      <div class="mark">CSDN @weixin_64540111</div>`;
  }
}
